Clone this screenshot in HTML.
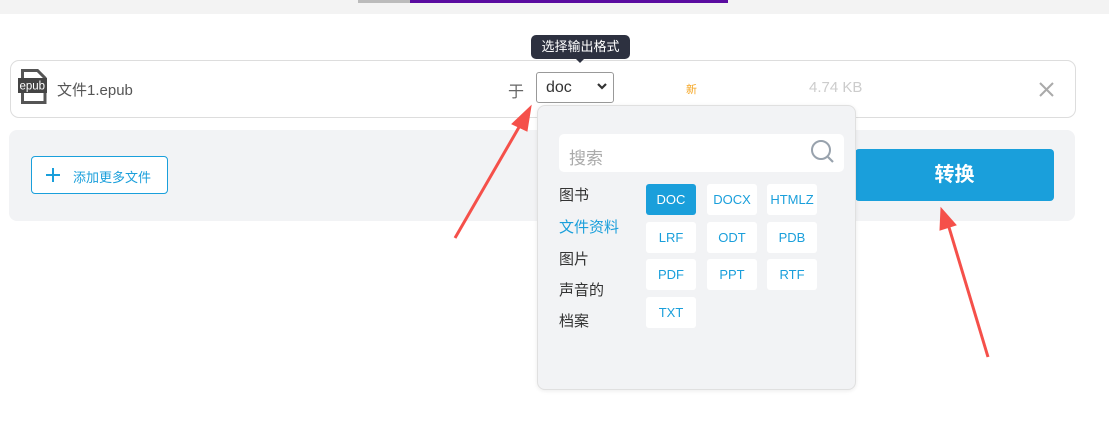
<html><head><style>
body{margin:0;width:1109px;height:432px;background:#fff;font-family:"Liberation Sans","Noto Sans CJK SC",sans-serif;position:relative;overflow:hidden}
.a{position:absolute}
.fmt{position:absolute;width:50px;height:31px;background:#fff;border-radius:3px;color:#1a9fdb;font-size:13px;text-align:center;line-height:31px}
.cat{position:absolute;left:559px;font-size:15px;color:#333}
</style></head><body>
<div class="a" style="left:0;top:0;width:1109px;height:14px;background:#f3f3f3"></div>
<div class="a" style="left:358px;top:0;width:52px;height:3px;background:#bbb"></div>
<div class="a" style="left:410px;top:0;width:318px;height:3px;background:#5a0ca0"></div>

<div class="a" style="left:10px;top:60px;width:1064px;height:56px;border:1px solid #ddd;border-radius:9px"></div>
<svg class="a" style="left:18px;top:69px" width="30" height="35" viewBox="0 0 30 35"><path d="M4.5 1.5h15l7.5 7.5v24.5h-22.5z" fill="none" stroke="#555" stroke-width="3"/><rect x="0" y="9" width="29" height="15" fill="#444"/><text x="1.5" y="20.5" font-size="11.5" fill="#fff" font-family="Liberation Sans">epub</text></svg>
<div class="a" style="left:57px;top:79px;font-size:15px;color:#555">文件1.epub</div>
<div class="a" style="left:508px;top:78px;font-size:16px;color:#666">于</div>
<div class="a" style="left:536px;top:72px;width:76px;height:29px;border:1px solid #999;border-radius:3px;background:#fff"></div>
<div class="a" style="left:546px;top:79px;font-size:16px;color:#333">doc</div>
<svg class="a" style="left:596px;top:82px" width="12" height="10"><path d="M2 2l4 4 4-4" stroke="#333" stroke-width="2.2" fill="none"/></svg>
<div class="a" style="left:531px;top:35px;width:99px;height:24px;background:#2d3140;border-radius:5px;color:#fff;font-size:13px;line-height:24px;text-align:center">选择输出格式</div>
<div class="a" style="left:575px;top:58px;border:5px solid transparent;border-top-color:#2d3140"></div>
<div class="a" style="left:686px;top:81px;font-size:11px;color:#f5a623">新</div>
<div class="a" style="left:809px;top:79px;font-size:15px;color:#ccc">4.74 KB</div>
<svg class="a" style="left:1039px;top:82px" width="15" height="15"><path d="M1 1l13 13M14 1L1 14" stroke="#aaa" stroke-width="2"/></svg>

<div class="a" style="left:9px;top:130px;width:1066px;height:91px;background:#f2f3f5;border-radius:8px"></div>
<div class="a" style="left:31px;top:156px;width:135px;height:36px;border:1px solid #1a9fdb;border-radius:4px;background:#fff"></div>
<svg class="a" style="left:46px;top:168px" width="14" height="14"><path d="M7 0v14M0 7h14" stroke="#1a9fdb" stroke-width="2"/></svg>
<div class="a" style="left:73px;top:167px;font-size:13px;color:#1a9fdb">添加更多文件</div>
<div class="a" style="left:855px;top:149px;width:199px;height:52px;background:#1a9fdb;border-radius:4px;color:#fff;font-size:20px;font-weight:bold;line-height:52px;text-align:center">转换</div>

<div class="a" style="left:537px;top:105px;width:317px;height:283px;background:#f2f3f5;border:1px solid #e0e0e0;border-radius:8px;box-shadow:0 1px 4px rgba(0,0,0,.08)"></div>
<div class="a" style="left:559px;top:134px;width:285px;height:38px;background:#fff;border-radius:5px"></div>
<div class="a" style="left:569px;top:144px;font-size:17px;color:#aaa">搜索</div>
<svg class="a" style="left:810px;top:138px" width="26" height="26"><circle cx="11" cy="12" r="9" fill="none" stroke="#98a2ad" stroke-width="2"/><path d="M18 19l5 5" stroke="#98a2ad" stroke-width="2.2"/></svg>
<div class="cat" style="top:184px">图书</div>
<div class="cat" style="top:216px;color:#1a9fdb">文件资料</div>
<div class="cat" style="top:248px">图片</div>
<div class="cat" style="top:279px">声音的</div>
<div class="cat" style="top:310px">档案</div>
<div class="fmt" style="left:646px;top:184px;background:#1a9fdb;color:#fff">DOC</div>
<div class="fmt" style="left:707px;top:184px">DOCX</div>
<div class="fmt" style="left:767px;top:184px">HTMLZ</div>
<div class="fmt" style="left:646px;top:222px">LRF</div>
<div class="fmt" style="left:707px;top:222px">ODT</div>
<div class="fmt" style="left:767px;top:222px">PDB</div>
<div class="fmt" style="left:646px;top:259px">PDF</div>
<div class="fmt" style="left:707px;top:259px">PPT</div>
<div class="fmt" style="left:767px;top:259px">RTF</div>
<div class="fmt" style="left:646px;top:297px">TXT</div>

<svg class="a" style="left:0;top:0" width="1109" height="432"><g fill="#f5504a" stroke="#f5504a"><path d="M455 238L522 122" stroke-width="3"/><path d="M531 106L512 124L527 131Z"/><path d="M988 357L948 224" stroke-width="3"/><path d="M941 208L940 230L956 225Z"/></g></svg>
</body></html>
